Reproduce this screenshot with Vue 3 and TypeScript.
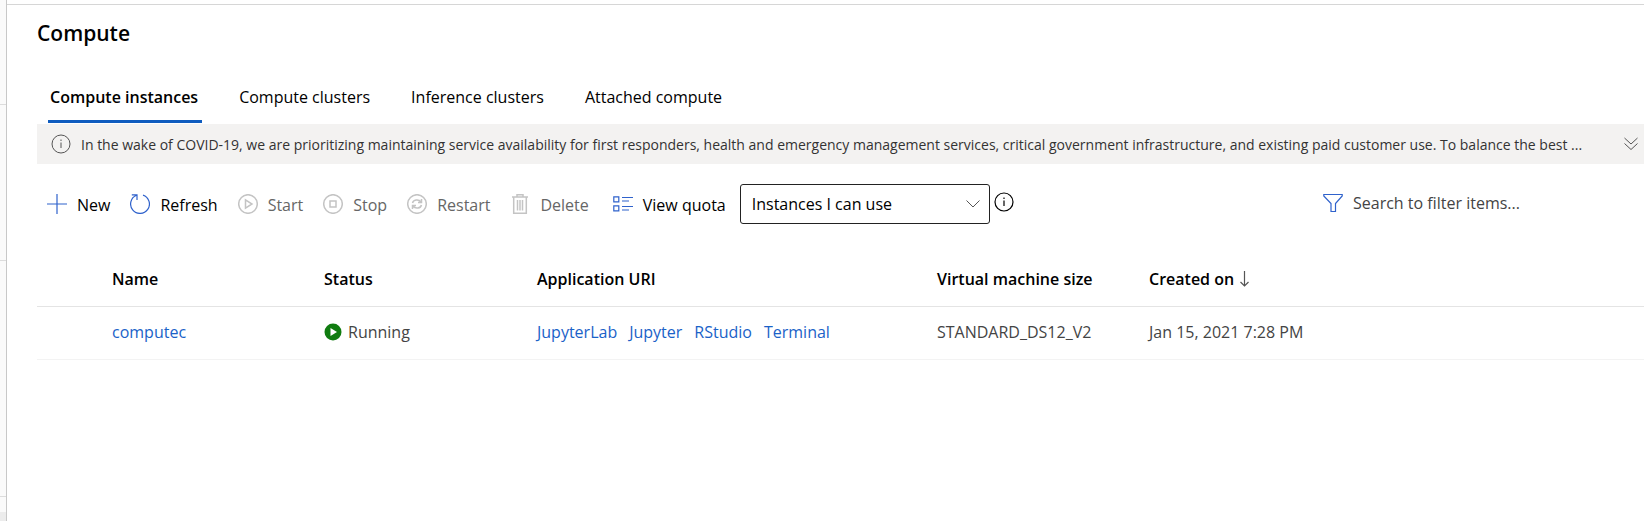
<script setup lang="ts">
import { ref } from 'vue'

interface Instance {
  name: string
  status: string
  apps: string[]
  size: string
  created: string
}

const tabs: string[] = ['Compute instances', 'Compute clusters', 'Inference clusters', 'Attached compute']
const activeTab = ref<string>(tabs[0])
const scope = ref<string>('Instances I can use')
const filter = ref<string>('')

const instances: Instance[] = [
  {
    name: 'computec',
    status: 'Running',
    apps: ['JupyterLab', 'Jupyter', 'RStudio', 'Terminal'],
    size: 'STANDARD_DS12_V2',
    created: 'Jan 15, 2021 7:28 PM',
  },
]
</script>

<template>
  <div class="page">
    <aside class="rail">
      <span class="rail-line first"></span>
      <span class="rail-line second"></span>
      <span class="rail-line third"></span>
      <span class="rail-foot"></span>
    </aside>
    <main class="main">
      <h1>Compute</h1>

      <nav class="tabs" role="tablist">
        <button
          v-for="tab in tabs"
          :key="tab"
          type="button"
          role="tab"
          class="tab"
          :class="{ active: tab === activeTab }"
          :aria-selected="tab === activeTab"
          @click="activeTab = tab"
        >{{ tab }}</button>
      </nav>

      <div class="banner">
        <svg class="icon" viewBox="0 0 20 20" width="20" height="20">
          <circle cx="10" cy="10" r="9" />
          <path d="M10 8.5V14M10 5.5V7" />
        </svg>
        <p>In the wake of COVID-19, we are prioritizing maintaining service availability for first responders, health and emergency management services, critical government infrastructure, and existing paid customer use. To balance the best ...</p>
        <button type="button" class="expand" aria-label="Expand message">
          <svg class="icon" viewBox="0 0 14 14" width="14" height="14">
            <path d="M.5 1L7 7L13.500 1M.5 6.500L7 12.500L13.500 6.500" />
          </svg>
        </button>
      </div>

      <div class="toolbar">
        <button type="button" class="command">
          <svg class="icon" viewBox="0 0 20 20" width="20" height="20"><path d="M10 0V20M0 10H20" /></svg>
          <span>New</span>
        </button>
        <button type="button" class="command">
          <svg class="icon" viewBox="0 0 20 20" width="20" height="20">
            <path d="M13 1.100A9.400 9.400 0 1 1 6.500 1.300M1.800 .8H7V6" />
          </svg>
          <span>Refresh</span>
        </button>
        <button type="button" class="command" disabled>
          <svg class="icon" viewBox="0 0 20 20" width="20" height="20">
            <circle cx="10" cy="10" r="9.300" /><path d="M7.500 5.800V14.200L14 10Z" />
          </svg>
          <span>Start</span>
        </button>
        <button type="button" class="command" disabled>
          <svg class="icon" viewBox="0 0 20 20" width="20" height="20">
            <circle cx="10" cy="10" r="9.300" /><path d="M7 7H13V13H7Z" />
          </svg>
          <span>Stop</span>
        </button>
        <button type="button" class="command" disabled>
          <svg class="icon" viewBox="0 0 20 20" width="20" height="20">
            <circle cx="10" cy="10" r="9.300" />
            <path d="M5.500 9C6.200 5.800 11.500 4.500 14 8M14.500 5V8.500H11M14.500 11C13.800 14.200 8.500 15.500 6 12M5.500 15V11.500H9" />
          </svg>
          <span>Restart</span>
        </button>
        <button type="button" class="command" disabled>
          <svg class="icon" viewBox="0 0 20 20" width="20" height="20">
            <path d="M2 3H18M7 3V.7H13V3M3.700 3V19.300H16.300V3M7.500 6V16.500M10 6V16.500M12.500 6V16.500" />
          </svg>
          <span>Delete</span>
        </button>
        <button type="button" class="command quota">
          <svg class="icon" viewBox="0 0 20 20" width="20" height="20">
            <path d="M.8 2.800H5.800V7.800H.8ZM.8 11.800H5.800V16.800H.8Z" />
            <path d="M9 3.500H20M9 7H16M9 12.500H20M9 16H16" />
          </svg>
          <span>View quota</span>
        </button>
        <div class="scope">
          <select v-model="scope" aria-label="Instance scope">
            <option>Instances I can use</option>
            <option>All instances</option>
          </select>
          <svg class="icon chevron" viewBox="0 0 14 8" width="14" height="8"><path d="M.5 .5L7 7L13.500 .5" /></svg>
        </div>
        <button type="button" class="info" aria-label="About instance scope">
          <svg class="icon" viewBox="0 0 20 20" width="20" height="20">
            <circle cx="10" cy="10" r="9" />
            <path d="M10 8.500V14M10 5.500V7" />
          </svg>
        </button>
        <label class="search">
          <svg class="icon" viewBox="0 0 20 20" width="20" height="20">
            <path d="M.8 1.500H19.200V3L12.500 10.500V18.500H8V10.500L.8 3Z" />
          </svg>
          <input v-model="filter" type="text" placeholder="Search to filter items..." aria-label="Search to filter items" />
        </label>
      </div>

      <table>
        <colgroup>
          <col class="c-pick" /><col class="c-name" /><col class="c-status" /><col class="c-uri" /><col class="c-size" /><col />
        </colgroup>
        <thead>
          <tr>
            <td></td>
            <th scope="col">Name</th>
            <th scope="col">Status</th>
            <th scope="col">Application URI</th>
            <th scope="col">Virtual machine size</th>
            <th scope="col">
              <span class="sorted">
                Created on
                <svg class="icon" viewBox="0 0 9 16" width="9" height="16"><path d="M4.500 0V15M.5 11L4.500 15L8.500 11" /></svg>
              </span>
            </th>
          </tr>
        </thead>
        <tbody>
          <tr v-for="item in instances" :key="item.name">
            <td></td>
            <td><a href="#">{{ item.name }}</a></td>
            <td>
              <span class="status">
                <svg viewBox="0 0 18 18" width="18" height="18">
                  <circle cx="9" cy="9" r="8.500" fill="#107c10" /><path d="M6.500 5V13L13 9Z" fill="#fff" />
                </svg>
                {{ item.status }}
              </span>
            </td>
            <td>
              <span class="apps"><a v-for="app in item.apps" :key="app" href="#">{{ app }}</a></span>
            </td>
            <td>{{ item.size }}</td>
            <td>{{ item.created }}</td>
          </tr>
        </tbody>
      </table>
    </main>
  </div>
</template>

<style>
body {
  margin: 0;
  background: #fff;
}
</style>

<style scoped>
.page {
  display: flex;
  min-height: 100vh;
  overflow: hidden;
  font-family: 'Open Sans', 'Noto Sans', sans-serif;
  font-size: 16px;
  line-height: 24px;
  color: #000;
}

.page * {
  box-sizing: border-box;
}

.rail {
  flex: none;
  display: flex;
  flex-direction: column;
  width: 7px;
  background: #fafafa;
  border-right: 1px solid #c8c8c8;
}

.rail-line {
  border-bottom: 1px solid #dcdcdc;
}

.rail-line.first {
  height: 105px;
}

.rail-line.second {
  height: 156px;
}

.rail-line.third {
  height: 236px;
}

.rail-foot {
  flex: 1;
  margin-top: 15px;
  background: #ececec;
}

.main {
  flex: 1;
  min-width: 0;
  margin-top: 4px;
  padding-left: 30px;
  border-top: 1px solid #d6d6d6;
}

h1 {
  margin: 12px 0 0;
  font-size: 21px;
  line-height: 32px;
  font-weight: 600;
}

button,
select,
input {
  margin: 0;
  padding: 0;
  border: 0;
  background: none;
  font: inherit;
  color: inherit;
}

.icon {
  flex: none;
  fill: none;
  stroke: currentColor;
  stroke-width: 1.2;
}

.tabs {
  display: flex;
  gap: 35px;
  height: 75px;
  padding: 26px 0 1px 11px;
}

.tab {
  padding: 0 4px 2px 2px;
  border-bottom: 3px solid transparent;
}

.tab.active {
  font-weight: 600;
  border-bottom-color: #0f5cbf;
}

.banner {
  display: flex;
  align-items: center;
  height: 40px;
  padding: 0 6px 0 14px;
  background: #f3f2f1;
  color: #333;
  font-size: 14px;
}

.banner p {
  flex: 1;
  min-width: 0;
  margin: 0 0 0 10px;
  padding-top: 2px;
  overflow: hidden;
  white-space: nowrap;
}

.banner .icon {
  color: #555;
  stroke-width: 1;
}

.expand {
  display: flex;
}

.toolbar {
  display: flex;
  align-items: center;
  height: 40px;
  margin-top: 20px;
  padding-left: 10px;
}

.command {
  display: flex;
  align-items: center;
  gap: 10px;
  margin-right: 20px;
  white-space: nowrap;
}

.command span {
  padding-top: 2px;
}

.command .icon {
  color: #2f62cc;
}

.command:disabled {
  color: #666;
}

.command:disabled .icon {
  color: #c4c4c4;
  stroke-width: 1.5;
}

.command.quota {
  margin-left: 4px;
  margin-right: 14px;
}

.scope {
  position: relative;
  width: 250px;
  height: 40px;
}

.scope select {
  width: 100%;
  height: 100%;
  padding: 0 34px 0 11px;
  border: 1px solid #222;
  border-radius: 3px;
  appearance: none;
}

.chevron {
  position: absolute;
  top: 16px;
  right: 10px;
  color: #555;
  stroke-width: 1;
}

.info {
  display: flex;
  margin-left: 4px;
  padding-bottom: 4px;
}

.search {
  display: flex;
  align-items: center;
  gap: 10px;
  width: 321px;
  margin-left: auto;
  padding-bottom: 3px;
}

.search .icon {
  color: #2f62cc;
}

.search input {
  width: 220px;
  outline: none;
  color: #333;
}

.search input::placeholder {
  color: #444;
  opacity: 1;
}

table {
  width: 100%;
  margin-top: 28px;
  border-collapse: collapse;
  table-layout: fixed;
}

.c-pick {
  width: 75px;
}

.c-name,
.c-size {
  width: 212px;
}

.c-status {
  width: 213px;
}

.c-uri {
  width: 400px;
}

th,
td {
  padding: 0;
  text-align: left;
  white-space: nowrap;
}

th {
  font-weight: 600;
}

thead tr {
  height: 54px;
  border-bottom: 1px solid #e4e4e4;
}

tbody tr {
  height: 53px;
  border-bottom: 1px solid #f3f3f3;
  color: #444;
}

tbody td {
  padding-bottom: 2px;
}

a {
  color: #1a62c8;
  text-decoration: none;
}

.sorted,
.status {
  display: flex;
  align-items: center;
  gap: 6px;
}

.sorted .icon {
  color: #555;
}

.apps {
  display: flex;
  gap: 12px;
}
</style>
